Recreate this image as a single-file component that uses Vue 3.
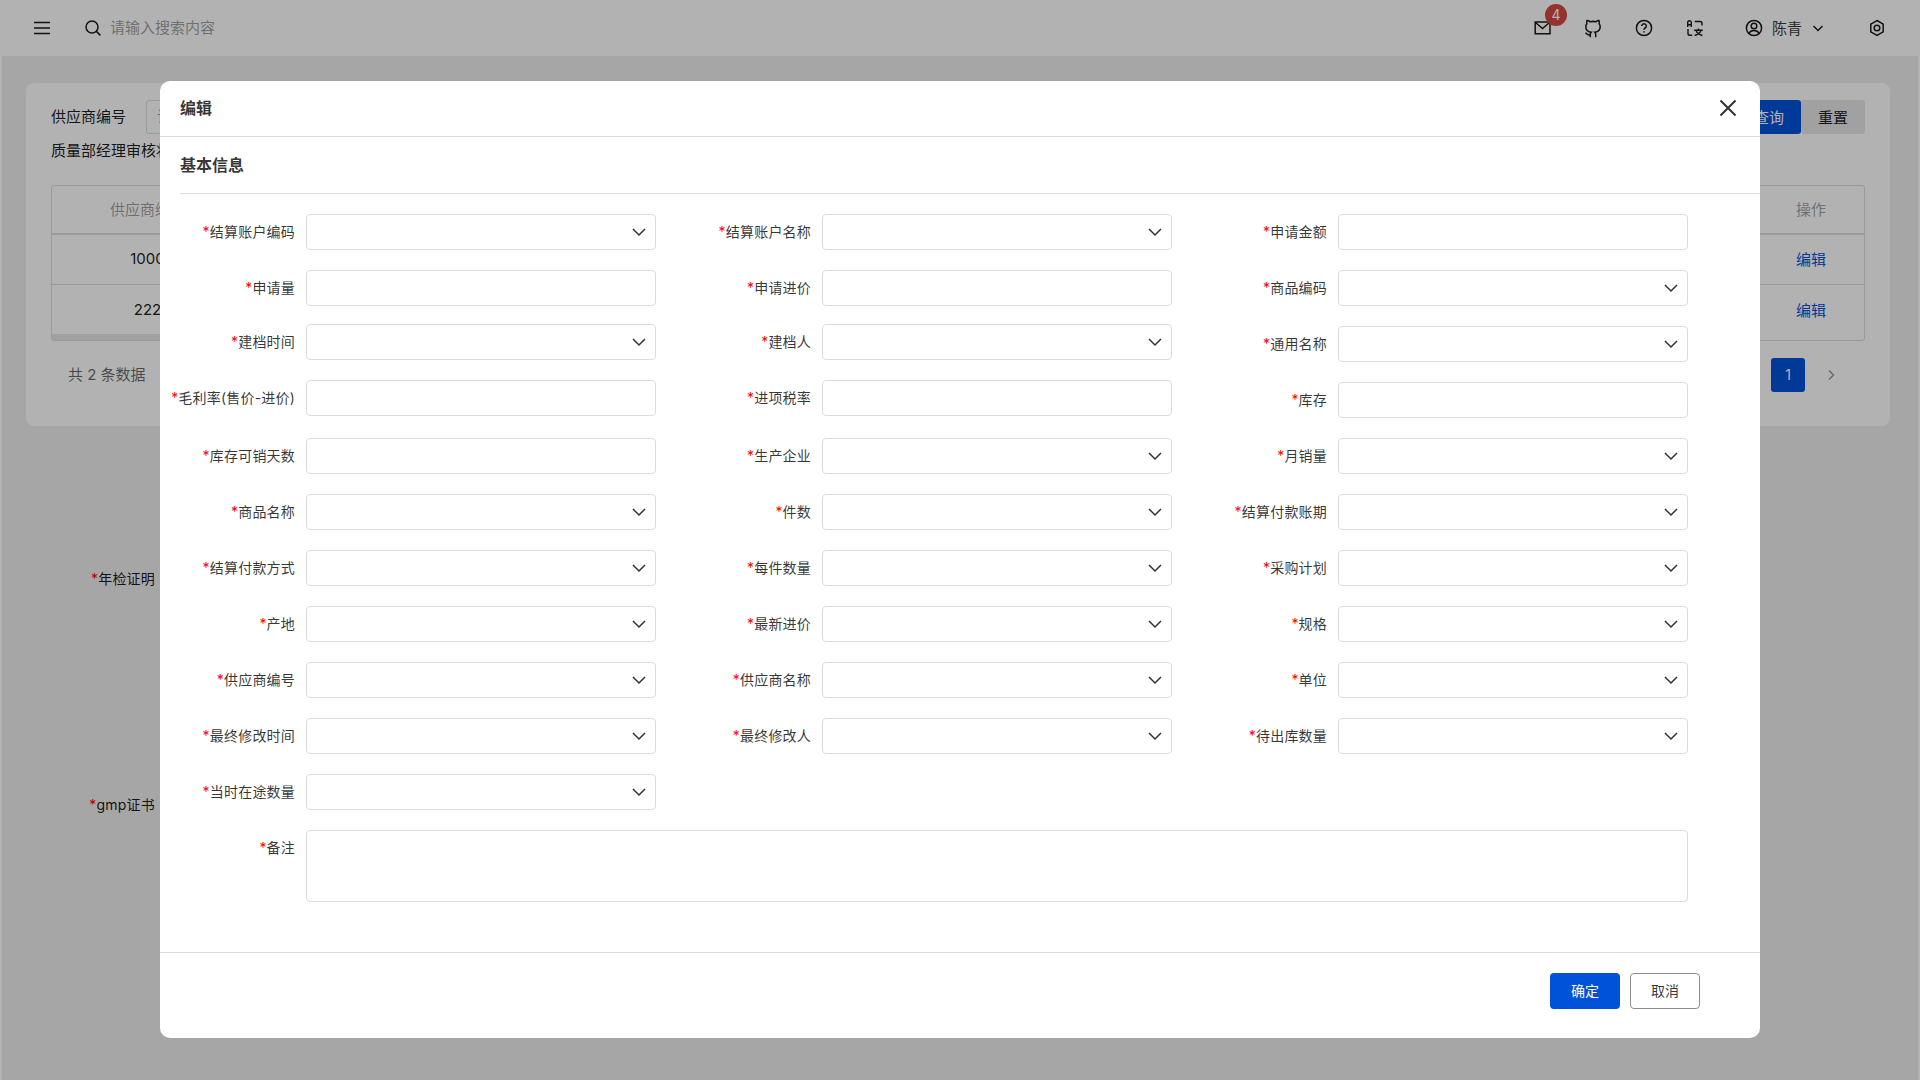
<template>
  <div class="page">
    <header class="topbar">
      <svg class="menu-icon" width="16" height="14" viewBox="0 0 16 14"><path d="M0 1.5h16M0 7h16M0 12.5h16" /></svg>
      <svg class="search-icon" width="20" height="20" viewBox="0 0 20 20"><circle cx="9" cy="9" r="6" /><path d="M13.4 13.4l4 4" /></svg>
      <span class="search-text">请输入搜索内容</span>
      <div class="top-right">
        <div class="icon-box mail">
          <svg width="24" height="24" viewBox="0 0 24 24"><path d="M5.200 6h14.800v11.800H5.200zM5.500 6.500l7 6 7-6" /></svg>
          <span class="badge">4</span>
        </div>
        <div class="icon-box">
          <svg class="github" width="24" height="24" viewBox="1 1 22 22"><path d="M9.500 20.500v-2.800c0-.8.3-1.400.8-1.900-2.600-.3-4.900-1.500-4.900-5 0-1.100.4-2 1-2.700-.2-.5-.3-1.600.1-3 0 0 1.100-.2 3 1.200a9 9 0 0 1 5 0c1.900-1.400 3-1.200 3-1.200.4 1.400.3 2.500.1 3 .7.7 1 1.600 1 2.700 0 3.500-2.300 4.700-4.900 5 .5.500.8 1.100.8 1.900v2.800M9.500 18.300c-2.500.7-3.300-.5-4.300-2" /></svg>
        </div>
        <div class="icon-box">
          <svg width="24" height="24" viewBox="0 0 24 24"><circle cx="12" cy="12" r="7.600" /><path d="M9.700 10a2.300 2.300 0 1 1 3.500 2c-.8.500-1.200 1-1.200 1.800" /><path d="M12 15.300v1.300" /></svg>
        </div>
        <div class="icon-box">
          <svg class="translate" width="24" height="24" viewBox="0 0 24 24"><path d="M4.700 11V6.600a1.800 1.800 0 0 1 3.600 0V11M4.700 8.800h3.600M11.800 5.500h5.200a2 2 0 0 1 2 2v2M5 13v4.500a1.800 1.800 0 0 0 1.800 1.800h2.400M11.200 14.200h8.600M13 14.200c.7 2.300 2.600 4.300 6.400 5.300M18 14.200c-.7 2.300-2.600 4.300-6.400 5.300M15.500 12.400v1.800" /></svg>
        </div>
        <div class="user">
          <svg width="20" height="20" viewBox="0 0 20 20"><circle cx="10" cy="10" r="7.600" /><circle cx="10" cy="8" r="2.800" /><path d="M4.800 15.500c1-2 3-3 5.200-3s4.200 1 5.200 3" /></svg>
          <span class="user-name">陈青</span>
          <svg class="user-arrow" width="16" height="16" viewBox="0 0 16 16"><path d="M3.500 6l4.500 4.500L12.500 6" /></svg>
        </div>
        <div class="icon-box settings">
          <svg width="24" height="24" viewBox="0 0 24 24"><path d="M12 4.500l6.200 3.700v7.600L12 19.500l-6.200-3.700V8.200z" /><circle cx="12" cy="12" r="2.800" /></svg>
        </div>
      </div>
    </header>

    <main class="main">
      <section class="card">
        <div class="search-row">
          <span class="search-label">供应商编号</span>
          <div class="search-input">请输入</div>
          <div class="search-btns">
            <button class="btn-query">查询</button>
            <button class="btn-reset">重置</button>
          </div>
        </div>
        <div class="search-label second">质量部经理审核状态</div>
        <div class="table">
          <div class="tr head">
            <div class="td first">供应商编号</div>
            <div class="td grow"></div>
            <div class="td last">操作</div>
          </div>
          <div v-for="row in tableRows" :key="row" class="tr">
            <div class="td first">{{ row }}</div>
            <div class="td grow"></div>
            <div class="td last link">编辑</div>
          </div>
          <div class="scrollbar"></div>
        </div>
        <div class="pager">
          <span class="total">共 2 条数据</span>
          <span class="page-num">1</span>
          <svg class="page-next" width="16" height="16" viewBox="0 0 16 16"><path d="M6 3.500l4.500 4.500L6 12.500" /></svg>
        </div>
      </section>
      <div class="cert cert-year"><i>*</i>年检证明</div>
      <div class="cert cert-gmp"><i>*</i>gmp证书</div>
    </main>

    <div class="overlay">
      <div class="dialog">
        <div class="dialog-head">
          <span class="dialog-title">编辑</span>
          <svg class="close" width="20" height="20" viewBox="0 0 20 20"><path d="M2.500 2.500l15 15M17.500 2.500l-15 15" /></svg>
        </div>
        <div class="section-title">基本信息</div>
        <div class="form">
          <div v-for="f in fields" :key="f.label" class="field" :class="{ up: f.up }">
            <label class="label"><i>*</i>{{ f.label }}</label>
            <div class="control">
              <svg v-if="f.select" class="arrow" width="16" height="16" viewBox="0 0 16 16"><path d="M2 5l6 6 6-6" /></svg>
            </div>
          </div>
          <div class="field full">
            <label class="label"><i>*</i>备注</label>
            <div class="control textarea"></div>
          </div>
        </div>
        <div class="dialog-foot">
          <button class="btn-ok">确定</button>
          <button class="btn-cancel">取消</button>
        </div>
      </div>
    </div>
  </div>
</template>

<script setup>
const tableRows = ['1000', '222']

// select = 下拉, up = 这一行往上偏 2px
const fields = [
  { label: '结算账户编码', select: true },
  { label: '结算账户名称', select: true },
  { label: '申请金额' },
  { label: '申请量' },
  { label: '申请进价' },
  { label: '商品编码', select: true },
  { label: '建档时间', select: true, up: true },
  { label: '建档人', select: true, up: true },
  { label: '通用名称', select: true },
  { label: '毛利率(售价-进价)', up: true },
  { label: '进项税率', up: true },
  { label: '库存' },
  { label: '库存可销天数' },
  { label: '生产企业', select: true },
  { label: '月销量', select: true },
  { label: '商品名称', select: true },
  { label: '件数', select: true },
  { label: '结算付款账期', select: true },
  { label: '结算付款方式', select: true },
  { label: '每件数量', select: true },
  { label: '采购计划', select: true },
  { label: '产地', select: true },
  { label: '最新进价', select: true },
  { label: '规格', select: true },
  { label: '供应商编号', select: true },
  { label: '供应商名称', select: true },
  { label: '单位', select: true },
  { label: '最终修改时间', select: true },
  { label: '最终修改人', select: true },
  { label: '待出库数量', select: true },
  { label: '当时在途数量', select: true }
]
</script>

<style>
html,
body {
  margin: 0;
  background: #fff;
}
</style>

<style scoped>
.page {
  position: relative;
  width: 1920px;
  height: 1080px;
  overflow: hidden;
  font-family: Inter, "Noto Sans CJK SC", sans-serif;
  font-size: 15px;
  color: rgba(0, 0, 0, 0.9);
}

svg {
  fill: none;
  stroke: #1a1a1a;
  stroke-width: 1.5;
  flex: none;
}

svg.github {
  stroke-width: 1.4;
}

svg.translate {
  stroke-width: 1.4;
}

/* 顶栏 */
.topbar {
  height: 56px;
  display: flex;
  align-items: center;
  padding: 0 31px 0 35px;
  box-sizing: border-box;
  background: #fff;
}

.menu-icon {
  margin-right: 33px;
  margin-left: -1px;
}

.search-icon {
  margin-top: -1px;
}

.search-text {
  margin-left: 7px;
  margin-top: -3px;
  color: rgba(0, 0, 0, 0.4);
}

.top-right {
  margin-left: auto;
  display: flex;
  align-items: center;
  gap: 27px;
}

.icon-box {
  position: relative;
  width: 24px;
  height: 24px;
}

.badge {
  position: absolute;
  left: 15px;
  top: -12px;
  width: 22px;
  height: 22px;
  border-radius: 50%;
  background: #d54941;
  color: #fff;
  font-size: 14px;
  line-height: 22px;
  text-align: center;
}

.user {
  display: flex;
  align-items: center;
  margin-left: 10px;
  color: rgba(0, 0, 0, 0.8);
}

.user-name {
  margin-left: 8px;
  margin-top: -2px;
}

.user-arrow {
  margin-left: 8px;
}

.settings {
  margin-left: 12px;
}

/* 背景内容 */
.main {
  margin: 0 2px;
  height: 1024px;
  padding: 27px 28px 0 24px;
  box-sizing: border-box;
  background: #eee;
}

.card {
  height: 343px;
  padding: 17px 25px 0;
  box-sizing: border-box;
  border-radius: 8px;
  background: #fff;
}

.search-row {
  display: flex;
  align-items: center;
  height: 34px;
}

.search-row .search-label {
  margin-top: -3px;
}

.search-label.second {
  line-height: 20px;
  margin-top: 7px;
}

.search-input {
  margin-left: 20px;
  width: 300px;
  height: 34px;
  line-height: 32px;
  padding-left: 10px;
  box-sizing: border-box;
  border: 1px solid #dcdcdc;
  border-radius: 3px;
  color: rgba(0, 0, 0, 0.4);
}

.search-btns {
  margin-left: auto;
  display: flex;
}

.search-btns button {
  width: 64px;
  height: 34px;
  padding: 0 0 2px;
  border: 0;
  border-radius: 3px;
  font: inherit;
}

.btn-query {
  background: #0052d9;
  color: #fff;
}

.btn-reset {
  background: #e7e7e7;
  color: rgba(0, 0, 0, 0.9);
}

.table {
  position: relative;
  margin-top: 24px;
  height: 156px;
  box-sizing: border-box;
  border: 1px solid #dcdcdc;
  border-radius: 3px;
  overflow: hidden;
}

.tr {
  display: flex;
  height: 50px;
  box-sizing: border-box;
  border-bottom: 1px solid #dcdcdc;
}

.tr + .tr + .tr {
  border-bottom: 0;
}

.tr.head {
  height: 49px;
  color: rgba(0, 0, 0, 0.4);
  border-bottom-width: 2px;
}

.td {
  display: flex;
  align-items: center;
  justify-content: center;
  padding-bottom: 2px;
}

.td.first {
  width: 191px;
}

.td.grow {
  flex: 1;
}

.td.last {
  width: 106px;
}

.link {
  color: #0052d9;
}

/* 横向滚动条, 只露出左边一段 */
.scrollbar {
  position: absolute;
  left: 0;
  bottom: 0;
  width: 1200px;
  height: 6px;
  background: #e7e7e7;
}

.pager {
  display: flex;
  align-items: center;
  margin-top: 17px;
  padding-left: 17px;
}

.total {
  margin-top: -3px;
  color: rgba(0, 0, 0, 0.6);
}

.page-num {
  margin-left: auto;
  margin-right: 18px;
  width: 34px;
  height: 34px;
  line-height: 34px;
  text-align: center;
  border-radius: 3px;
  background: #0052d9;
  color: #fff;
  font-size: 14px;
}

.page-next {
  margin-right: 26px;
  stroke: rgba(0, 0, 0, 0.4);
}

.cert {
  width: 129px;
  font-size: 14px;
  line-height: 20px;
  text-align: right;
  letter-spacing: 0.2px;
}

.cert i,
.label i {
  font-style: normal;
  color: #f00;
}

.cert-year {
  margin-top: 143px;
}

.cert-gmp {
  margin-top: 206px;
}

/* 弹窗 */
.overlay {
  position: absolute;
  inset: 0;
  display: flex;
  justify-content: center;
  align-items: flex-start;
  padding-top: 81px;
  box-sizing: border-box;
  background: rgba(0, 0, 0, 0.3);
}

.dialog {
  width: 1600px;
  background: #fff;
  border-radius: 10px;
  color: rgba(0, 0, 0, 0.8);
}

.dialog-head {
  height: 56px;
  padding: 0 20px;
  box-sizing: border-box;
  display: flex;
  align-items: center;
  justify-content: space-between;
  border-bottom: 1px solid #dcdcdc;
  font-size: 16px;
  font-weight: 700;
}

.dialog-title {
  margin-top: -3px;
}

.close {
  margin-top: -1px;
  margin-right: 2px;
  stroke: #333;
  stroke-width: 2;
}

.section-title {
  margin-left: 20px;
  height: 57px;
  line-height: 56px;
  box-sizing: border-box;
  border-bottom: 1px solid #dcdcdc;
  font-size: 16px;
  font-weight: 700;
}

.form {
  display: grid;
  grid-template-columns: repeat(3, 486px);
  column-gap: 30px;
  row-gap: 20px;
  align-items: start;
  padding: 20px 0 50px 10px;
}

.field {
  display: flex;
  height: 36px;
}

.field.up {
  margin-top: -2px;
  margin-bottom: 2px;
}

.field.full {
  grid-column: 1 / -1;
  height: 72px;
}

.label {
  width: 125px;
  margin-right: 11px;
  flex: none;
  font-size: 14px;
  line-height: 36px;
  text-align: right;
  white-space: nowrap;
  letter-spacing: 0.2px;
}

.control {
  flex: 1;
  height: 36px;
  display: flex;
  align-items: center;
  justify-content: flex-end;
  padding-right: 8px;
  box-sizing: border-box;
  border: 1px solid #dcdcdc;
  border-radius: 4px;
  background: #fff;
}

.control.textarea {
  height: 72px;
}

.arrow {
  stroke: #333;
  stroke-width: 1.5;
}

.dialog-foot {
  height: 86px;
  padding: 20px 60px 0 0;
  box-sizing: border-box;
  display: flex;
  justify-content: flex-end;
  gap: 10px;
  border-top: 1px solid #dcdcdc;
}

.dialog-foot button {
  width: 70px;
  height: 36px;
  padding: 0 0 2px;
  border-radius: 4px;
  font: inherit;
  font-size: 14px;
}

.btn-ok {
  border: 0;
  background: #0052d9;
  color: #fff;
}

.btn-cancel {
  border: 1px solid #8c8c8c;
  background: #fff;
  color: rgba(0, 0, 0, 0.8);
}
</style>
